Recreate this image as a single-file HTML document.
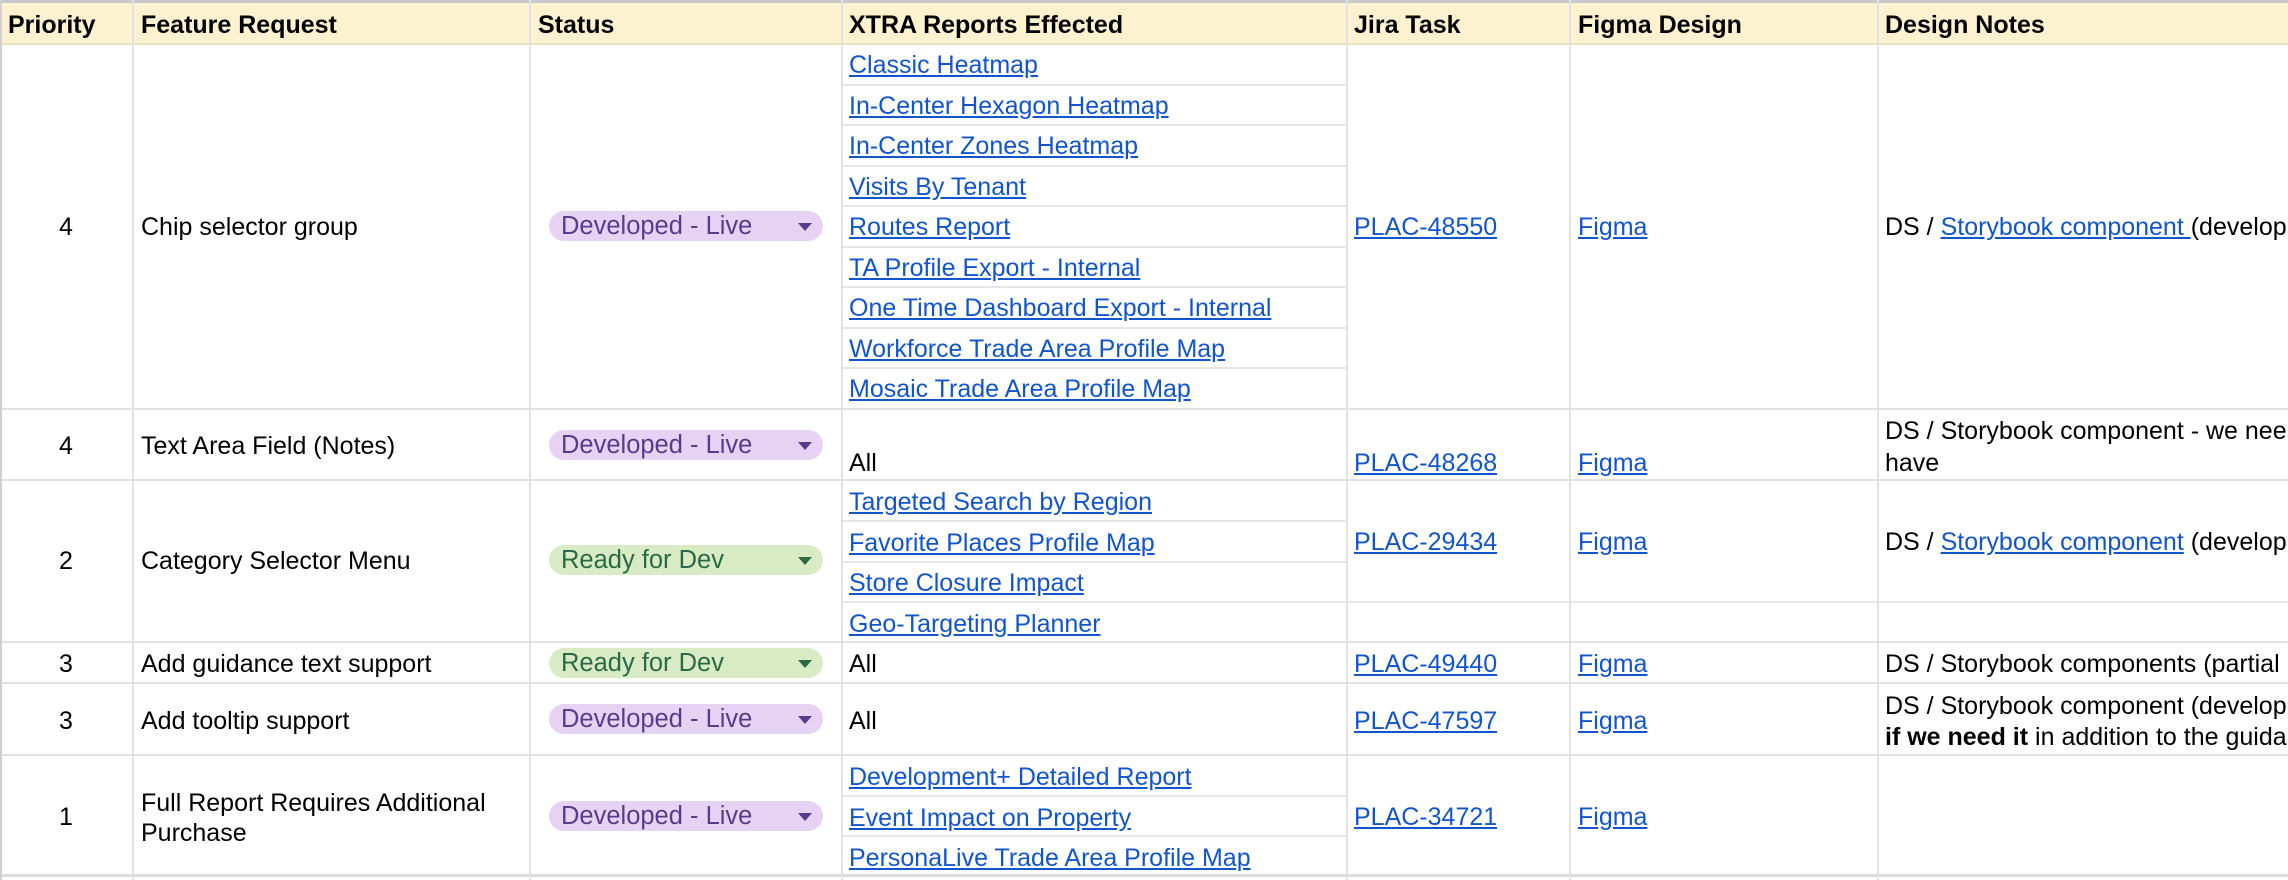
<!DOCTYPE html>
<html><head><meta charset="utf-8"><style>
*{margin:0;padding:0;box-sizing:border-box}
body{width:2288px;height:880px;overflow:hidden;background:#fff;font-family:"Liberation Sans",Arial,sans-serif;font-size:25px;color:#000;position:relative}
#w{position:absolute;left:0;top:0;width:2288px;height:880px;overflow:hidden}
.h{position:absolute;left:0;width:2288px;background:#e2e2e2}
.v{position:absolute;top:0;width:2px;height:880px;background:#e2e2e2}
.t{position:absolute;height:30px;line-height:30px;white-space:nowrap}
.l{color:#1155cc;text-decoration:underline}
.b{font-weight:bold}
.c{position:absolute;left:549px;width:274px;height:30px;border-radius:15px}
.c span{position:absolute;left:12px;top:0;line-height:30px;font-size:25.5px}
.c i{position:absolute;left:249px;top:12px;width:0;height:0;border-left:7px solid transparent;border-right:7px solid transparent;border-top:8px solid currentColor}
.p{background:#e6d3f3;color:#5b3a8c}
.g{background:#d9ebc5;color:#2a6b45}
.sl{position:absolute;height:2px;background:#e6e6e6}
#n{position:absolute;left:1879px;top:0;width:409px;height:880px;overflow:hidden}
#n .t{left:6px}
</style></head><body><div id="w">
<div style="position:absolute;left:0;top:0;width:2288px;height:3px;background:#c8c8c8"></div>
<div style="position:absolute;left:0;top:3px;width:2288px;height:41px;background:#fdf2cf"></div>
<div style="position:absolute;left:0;top:43px;width:2288px;height:2px;background:#ebe1bd"></div>

<div class="h" style="top:408px;height:2px"></div>
<div class="h" style="top:479px;height:2px"></div>
<div class="h" style="top:641px;height:2px"></div>
<div class="h" style="top:682px;height:2px"></div>
<div class="h" style="top:754px;height:2px"></div>
<div class="h" style="top:874px;height:3px;background:#dcdcdc"></div>

<div class="sl" style="left:842px;width:505px;top:84px"></div>
<div class="sl" style="left:842px;width:505px;top:124px"></div>
<div class="sl" style="left:842px;width:505px;top:165px"></div>
<div class="sl" style="left:842px;width:505px;top:205px"></div>
<div class="sl" style="left:842px;width:505px;top:246px"></div>
<div class="sl" style="left:842px;width:505px;top:286px"></div>
<div class="sl" style="left:842px;width:505px;top:327px"></div>
<div class="sl" style="left:842px;width:505px;top:367px"></div>
<div class="sl" style="left:842px;width:505px;top:520px"></div>
<div class="sl" style="left:842px;width:505px;top:561px"></div>
<div class="sl" style="left:842px;width:1446px;top:601px"></div>
<div class="sl" style="left:842px;width:505px;top:795px"></div>
<div class="sl" style="left:842px;width:505px;top:835px"></div>

<div class="v" style="left:0;background:#d0d0d0"></div>
<div class="v" style="left:132px"></div>
<div class="v" style="left:529px"></div>
<div class="v" style="left:841px"></div>
<div class="v" style="left:1346px"></div>
<div class="v" style="left:1569px"></div>
<div class="v" style="left:1877px"></div>

<div class="t b" style="left:8px;top:10px">Priority</div>
<div class="t b" style="left:141px;top:10px">Feature Request</div>
<div class="t b" style="left:538px;top:10px">Status</div>
<div class="t b" style="left:849px;top:10px">XTRA Reports Effected</div>
<div class="t b" style="left:1354px;top:10px">Jira Task</div>
<div class="t b" style="left:1578px;top:10px">Figma Design</div>

<!-- row1 -->
<div class="t" style="left:59px;top:212px">4</div>
<div class="t" style="left:141px;top:212px">Chip selector group</div>
<div class="c p" style="top:211px"><span>Developed - Live</span><i></i></div>
<div class="t l" style="left:849px;top:50px">Classic Heatmap</div>
<div class="t l" style="left:849px;top:91px">In-Center Hexagon Heatmap</div>
<div class="t l" style="left:849px;top:131px">In-Center Zones Heatmap</div>
<div class="t l" style="left:849px;top:172px">Visits By Tenant</div>
<div class="t l" style="left:849px;top:212px">Routes Report</div>
<div class="t l" style="left:849px;top:253px">TA Profile Export - Internal</div>
<div class="t l" style="left:849px;top:293px">One Time Dashboard Export - Internal</div>
<div class="t l" style="left:849px;top:334px">Workforce Trade Area Profile Map</div>
<div class="t l" style="left:849px;top:374px">Mosaic Trade Area Profile Map</div>
<div class="t l" style="left:1354px;top:212px">PLAC-48550</div>
<div class="t l" style="left:1578px;top:212px">Figma</div>

<!-- row2 -->
<div class="t" style="left:59px;top:431px">4</div>
<div class="t" style="left:141px;top:431px">Text Area Field (Notes)</div>
<div class="c p" style="top:430px"><span>Developed - Live</span><i></i></div>
<div class="t" style="left:849px;top:448px">All</div>
<div class="t l" style="left:1354px;top:448px">PLAC-48268</div>
<div class="t l" style="left:1578px;top:448px">Figma</div>

<!-- row3 -->
<div class="t" style="left:59px;top:546px">2</div>
<div class="t" style="left:141px;top:546px">Category Selector Menu</div>
<div class="c g" style="top:545px"><span>Ready for Dev</span><i></i></div>
<div class="t l" style="left:849px;top:487px">Targeted Search by Region</div>
<div class="t l" style="left:849px;top:528px">Favorite Places Profile Map</div>
<div class="t l" style="left:849px;top:568px">Store Closure Impact</div>
<div class="t l" style="left:849px;top:609px">Geo-Targeting Planner</div>
<div class="t l" style="left:1354px;top:527px">PLAC-29434</div>
<div class="t l" style="left:1578px;top:527px">Figma</div>

<!-- row4 -->
<div class="t" style="left:59px;top:649px">3</div>
<div class="t" style="left:141px;top:649px">Add guidance text support</div>
<div class="c g" style="top:648px"><span>Ready for Dev</span><i></i></div>
<div class="t" style="left:849px;top:649px">All</div>
<div class="t l" style="left:1354px;top:649px">PLAC-49440</div>
<div class="t l" style="left:1578px;top:649px">Figma</div>

<!-- row5 -->
<div class="t" style="left:59px;top:706px">3</div>
<div class="t" style="left:141px;top:706px">Add tooltip support</div>
<div class="c p" style="top:704px"><span>Developed - Live</span><i></i></div>
<div class="t" style="left:849px;top:706px">All</div>
<div class="t l" style="left:1354px;top:706px">PLAC-47597</div>
<div class="t l" style="left:1578px;top:706px">Figma</div>

<!-- row6 -->
<div class="t" style="left:59px;top:802px">1</div>
<div class="t" style="left:141px;top:788px">Full Report Requires Additional</div>
<div class="t" style="left:141px;top:818px">Purchase</div>
<div class="c p" style="top:801px"><span>Developed - Live</span><i></i></div>
<div class="t l" style="left:849px;top:762px">Development+ Detailed Report</div>
<div class="t l" style="left:849px;top:803px">Event Impact on Property</div>
<div class="t l" style="left:849px;top:843px">PersonaLive Trade Area Profile Map</div>
<div class="t l" style="left:1354px;top:802px">PLAC-34721</div>
<div class="t l" style="left:1578px;top:802px">Figma</div>

<div id="n">
<div class="t b" style="top:10px">Design Notes</div>
<div class="t" style="top:212px">DS / <span class="l">Storybook component </span>(develop</div>
<div class="t" style="top:416px">DS / Storybook component - we nee</div>
<div class="t" style="top:448px">have</div>
<div class="t" style="top:527px">DS / <span class="l">Storybook component</span> (develop</div>
<div class="t" style="top:649px">DS / Storybook components (partial</div>
<div class="t" style="top:691px">DS / Storybook component (develop</div>
<div class="t" style="top:722px"><span class="b">if we need it</span> in addition to the guida</div>
</div>
</div></body></html>
